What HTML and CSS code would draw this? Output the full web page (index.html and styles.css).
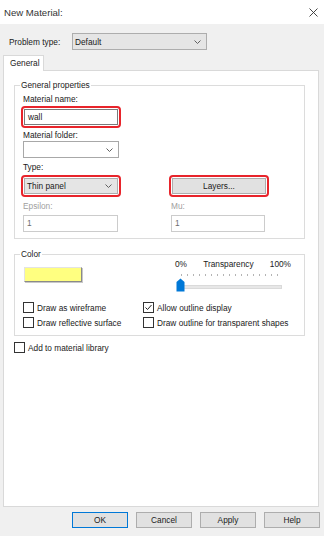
FILE: index.html
```html
<!DOCTYPE html>
<html lang="en">

<head>
    <meta charset="UTF-8">
    <meta name="viewport" content="width=device-width, initial-scale=1.0">
    <title>New Material</title>
    <link rel="stylesheet" href="styles.css">
</head>

<body>
    <div class="titlebar">
        <span class="title">New Material:</span>
        <svg class="close" width="9" height="9" viewBox="0 0 9 9">
            <path d="M0.5 0.5 L8.5 8.5 M8.5 0.5 L0.5 8.5" stroke="#333" stroke-width="0.9" fill="none" />
        </svg>
    </div>

    <div class="problem">
        <span class="problem-label">Problem type:</span>
        <div class="combo combo-wide">
            <span>Default</span>
            <svg class="chev" width="7" height="4" viewBox="0 0 7 4"><path d="M0.5 0.5 L3.5 3.5 L6.5 0.5" stroke="#606060" fill="none" /></svg>
        </div>
    </div>

    <div class="tabs">
        <div class="tab">General</div>
        <div class="tab-fill"></div>
    </div>

    <div class="panel">
        <fieldset class="group">
            <legend>General properties</legend>
            <div class="props-grid">
                <span class="lbl a-nameL">Material name:</span>
                <div class="ring a-name">
                    <div class="textbox">wall</div>
                </div>
                <span class="lbl a-folderL">Material folder:</span>
                <div class="combo combo-white a-folder">
                    <span></span>
                    <svg class="chev" width="7" height="4" viewBox="0 0 7 4"><path d="M0.5 0.5 L3.5 3.5 L6.5 0.5" stroke="#606060" fill="none" /></svg>
                </div>
                <span class="lbl a-typeL">Type:</span>
                <div class="ring a-type">
                    <div class="combo">
                        <span>Thin panel</span>
                        <svg class="chev" width="7" height="4" viewBox="0 0 7 4"><path d="M0.5 0.5 L3.5 3.5 L6.5 0.5" stroke="#606060" fill="none" /></svg>
                    </div>
                </div>
                <div class="ring a-layers">
                    <button class="btn btn-fill">Layers...</button>
                </div>
                <span class="lbl lbl-off a-epsL">Epsilon:</span>
                <span class="lbl lbl-off a-muL">Mu:</span>
                <div class="textbox textbox-off a-eps">1</div>
                <div class="textbox textbox-off a-mu">1</div>
            </div>
        </fieldset>

        <fieldset class="group group-color">
            <legend>Color</legend>
            <div class="color-grid">
                <div class="swatch"></div>
                <div class="transp">
                    <div class="transp-labels">
                        <span>0%</span>
                        <span>Transparency</span>
                        <span>100%</span>
                    </div>
                    <div class="ticks"></div>
                    <div class="slider">
                        <div class="track"></div>
                        <svg class="thumb" width="9" height="14" viewBox="0 0 9 14">
                            <path d="M0.5 4 L4.5 0.5 L8.5 4 L8.5 13.5 L0.5 13.5 Z" fill="#0078d7" />
                        </svg>
                    </div>
                </div>
                <label class="check"><span class="box"></span>Draw as wireframe</label>
                <label class="check">
                    <span class="box">
                        <svg width="9" height="9" viewBox="0 0 9 9"><path d="M1.5 4.5 L3.5 6.5 L7.5 2" stroke="#222" stroke-width="1" fill="none" /></svg>
                    </span>Allow outline display
                </label>
                <label class="check"><span class="box"></span>Draw reflective surface</label>
                <label class="check"><span class="box"></span>Draw outline for transparent shapes</label>
            </div>
        </fieldset>

        <label class="check check-lib"><span class="box"></span>Add to material library</label>
    </div>

    <div class="buttons">
        <button class="btn btn-default">OK</button>
        <button class="btn">Cancel</button>
        <button class="btn">Apply</button>
        <button class="btn">Help</button>
    </div>
</body>

</html>
```

FILE: styles.css
```css
body {
    margin: 0;
    width: 324px;
    height: 536px;
    overflow: hidden;
    background-color: #f0f0f0;
    font-family: "Liberation Sans", Arial, sans-serif;
    font-size: 8.3px;
    color: #1a1a1a;
}

.titlebar {
    height: 24px;
    background-color: #fff;
    display: flex;
    align-items: center;
    justify-content: space-between;
    padding: 0 6px 0 4px;
}

.title {
    font-size: 9.6px;
    color: #333;
}

.problem {
    display: flex;
    align-items: center;
    padding: 9px 0 0 9px;
}

.problem-label {
    width: 63px;
}

.combo {
    height: 17px;
    box-sizing: border-box;
    border: 1px solid #adadad;
    background-color: #e5e5e5;
    display: flex;
    align-items: center;
    justify-content: space-between;
    padding: 0 5px 0 2px;
}

.combo-wide {
    width: 135px;
}

.combo-white {
    background-color: #fff;
    border-color: #a8a8a8;
}

.tabs {
    display: flex;
    margin: 5px 5px 0 3px;
    height: 16px;
}

.tab {
    box-sizing: border-box;
    width: 41px;
    height: 16px;
    padding: 2px 0 0 6px;
    background-color: #fff;
    border: 1px solid #d9d9d9;
    border-bottom: none;
}

.tab-fill {
    flex: 1;
    border-bottom: 1px solid #d9d9d9;
}

.panel {
    box-sizing: border-box;
    width: 316px;
    height: 436px;
    margin-left: 3px;
    padding: 9px 0 0 10px;
    background-color: #fff;
    border: 1px solid #d9d9d9;
    border-top: none;
}

.group {
    box-sizing: border-box;
    width: 291px;
    min-width: 0;
    margin: 0;
    padding: 3px 8px 6px 8px;
    border: 1px solid #dcdcdc;
}

.group legend {
    line-height: 10px;
    padding: 0 1px;
    margin-left: -3px;
}

.props-grid {
    display: grid;
    grid-template-columns: 96px 96px;
    column-gap: 52px;
    grid-template-rows: 13px 22px 13px 17px 17px 22px 17px 18px;
    grid-template-areas:
        "nameL ."
        "name ."
        "folderL ."
        "folder ."
        "typeL ."
        "type layers"
        "epsL muL"
        "eps mu";
}

.lbl {
    line-height: 12px;
    align-self: center;
}

.lbl-off {
    color: #a0a0a0;
}

.a-nameL { grid-area: nameL; align-self: start; }
.a-name { grid-area: name; }
.a-folderL { grid-area: folderL; }
.a-folder { grid-area: folder; }
.a-typeL { grid-area: typeL; }
.a-type { grid-area: type; }
.a-layers { grid-area: layers; }
.a-epsL { grid-area: epsL; }
.a-muL { grid-area: muL; }
.a-eps { grid-area: eps; margin-top: 1px; width: 95px; }
.a-mu { grid-area: mu; margin-top: 1px; width: 94px; }

.ring {
    margin: 0 -2px;
    padding: 1px;
    border: 2px solid #e8242b;
    border-radius: 4px;
    display: flex;
}

.ring > * {
    flex: 1;
}

.textbox {
    box-sizing: border-box;
    height: 17px;
    line-height: 15px;
    padding-left: 3px;
    background-color: #fff;
    border: 1px solid #7a7a7a;
}

.ring .textbox {
    height: 16px;
    line-height: 14px;
}

.ring .combo {
    height: 16px;
}

.textbox-off {
    border-color: #cccccc;
    color: #6d6d6d;
}

.btn {
    box-sizing: border-box;
    width: 56px;
    height: 16px;
    padding: 0;
    font-family: inherit;
    font-size: inherit;
    color: #1a1a1a;
    background-color: #e1e1e1;
    border: 1px solid #adadad;
}

.btn-fill {
    width: auto;
    height: 16px;
}

.btn-default {
    border-color: #0078d7;
}

.group-color {
    margin-top: 10px;
    padding: 0 8px 5px 8px;
}

.color-grid {
    display: grid;
    grid-template-columns: 120px 1fr;
    grid-template-rows: 41px 15px 15px;
}

.swatch {
    box-sizing: border-box;
    width: 58px;
    height: 15px;
    margin: 8px 0 0 1px;
    background-color: #ffff80;
    border: 1px solid #e3e3e3;
    border-right-color: #8a8a8a;
    border-bottom-color: #8a8a8a;
    box-shadow: 1px 1px 0 #c8c8c8;
}

.transp {
    width: 116px;
    margin-left: 32px;
}

.transp-labels {
    display: flex;
    justify-content: space-between;
    line-height: 11px;
}

.ticks {
    height: 2px;
    width: 97px;
    margin: 4px 0 0 6px;
    background: repeating-linear-gradient(to right, #b4b4b4 0, #b4b4b4 1px, transparent 1px, transparent 6px);
}

.slider {
    display: grid;
    height: 14px;
    margin-top: 2px;
}

.track {
    grid-area: 1 / 1;
    align-self: center;
    box-sizing: border-box;
    width: 104px;
    height: 4px;
    margin: 3px 0 0 3px;
    background-color: #e7e7e7;
    border: 1px solid #dadada;
}

.thumb {
    grid-area: 1 / 1;
    margin-left: 1px;
}

.check {
    display: flex;
    align-items: center;
    gap: 3px;
    white-space: nowrap;
}

.box {
    box-sizing: border-box;
    width: 11px;
    height: 11px;
    border: 1px solid #333;
    background-color: #fff;
    display: flex;
    align-items: center;
    justify-content: center;
}

.check-lib {
    height: 15px;
    margin-top: 4px;
}

.buttons {
    display: flex;
    justify-content: flex-end;
    gap: 8px;
    padding: 5px 4px 0 0;
}
```
